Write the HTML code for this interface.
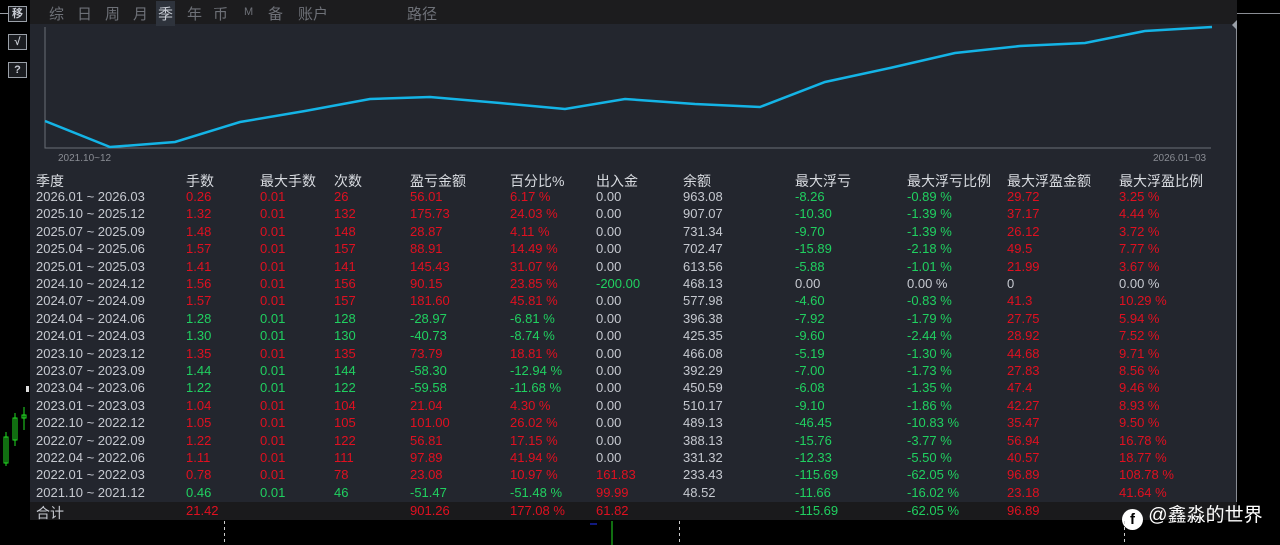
<!DOCTYPE html>
<html><head><meta charset="utf-8"><style>
*{margin:0;padding:0;box-sizing:border-box}
body{width:1280px;height:545px;background:#000;position:relative;overflow:hidden;font-family:"Liberation Sans","Noto Sans CJK SC",sans-serif;}
#panel{position:absolute;left:30px;top:0;width:1207px;height:520px;background:#23262e;border-right:1px solid #8a8d94;border-bottom:1px solid #8a8d94}
#top{position:absolute;left:0;top:0;width:1207px;height:24px;background:#1c1c1e}
#top span{position:absolute;top:3px;font-size:15px;color:#6e7178}
.btn{position:absolute;left:8px;width:19px;height:16px;border:1px solid #9aa0a8;color:#c8ccd4;font-size:11px;text-align:center;line-height:14px;font-weight:bold;background:#1a1c20}
.r{position:absolute;left:0;width:1207px;height:17.4px;font-size:13px;color:#c6c9d0}
.r span{position:absolute;top:1px;white-space:nowrap}
.R{color:#e01020!important}.G{color:#20d060!important}
.h span{color:#d8dbe0;font-size:14px}
#tot{position:absolute;left:0;top:502px;width:1207px;height:18px;background:#1a1a1c}
</style></head><body>
<div class="btn" style="top:6px">移</div>
<div class="btn" style="top:34px">√</div>
<div class="btn" style="top:62px">?</div>
<div style="position:absolute;left:0;top:13px;width:8px;height:1px;background:#9aa0a8"></div>
<div style="position:absolute;left:1237px;top:13px;width:43px;height:1px;background:#8a8d94"></div>
<svg style="position:absolute;left:0;top:380px" width="30" height="90"><g stroke="#22dd22" fill="none"><rect x="4" y="57" width="4" height="26"/><line x1="6" y1="52" x2="6" y2="86"/><rect x="13" y="38" width="4" height="22"/><line x1="15" y1="33" x2="15" y2="66"/><rect x="22" y="35" width="4" height="3"/><line x1="24" y1="27" x2="24" y2="50"/></g><rect x="26" y="6" width="3" height="6" fill="#ddd"/></svg>
<div id="panel">
<div id="top">
<span style="left:19px">综</span><span style="left:47px">日</span><span style="left:75px">周</span><span style="left:103px">月</span>
<span style="left:126px;top:1px;padding:2px 2px;background:#2e333c;color:#c8ccd4">季</span><span style="left:157px">年</span><span style="left:183px">币</span><span style="left:214px;font-size:11px;top:6px">M</span><span style="left:238px">备</span><span style="left:268px">账户</span><span style="left:377px">路径</span>
</div>
<svg style="position:absolute;left:0;top:0" width="1207" height="170">
<polyline points="15,27 15,148 1181,148" fill="none" stroke="#6a6e76" stroke-width="1"/>
<polyline points="15,121 80,147 145,142 210,122 275,111 340,99 400,97 470,103 535,109 595,99 665,104 730,107 795,82 860,68 925,53 990,46 1055,43 1115,31 1182,27" fill="none" stroke="#14b4e6" stroke-width="2.5"/>
<polygon points="1207,20 1202,25 1207,30" fill="#9aa0a8"/>
<text x="28" y="161" font-size="10" fill="#8a8d94" font-family="Liberation Sans">2021.10~12</text>
<text x="1123" y="161" font-size="10" fill="#8a8d94" font-family="Liberation Sans">2026.01~03</text>
</svg>
<div class="r h" style="top:170px"><span style="left:6px">季度</span><span style="left:156px">手数</span><span style="left:230px">最大手数</span><span style="left:304px">次数</span><span style="left:380px">盈亏金额</span><span style="left:480px">百分比%</span><span style="left:566px">出入金</span><span style="left:653px">余额</span><span style="left:765px">最大浮亏</span><span style="left:877px">最大浮亏比例</span><span style="left:977px">最大浮盈金额</span><span style="left:1089px">最大浮盈比例</span></div>
<div id="rows"></div>
<div id="tot"></div>
</div>
<div style="position:absolute;left:1122px;top:500px;width:160px;height:22px;font-size:19px;color:#fff;font-family:'Liberation Sans','Noto Sans CJK SC',sans-serif"><span style="display:inline-block;width:21px;height:21px;border-radius:50%;background:#fff;color:#000;font-weight:bold;text-align:center;line-height:21px;font-size:15px;vertical-align:-3px">f</span> @鑫淼的世界</div>
<svg style="position:absolute;left:0;top:521px" width="1280" height="24"><g stroke="#ccc" stroke-dasharray="3,3"><line x1="224.5" y1="0" x2="224.5" y2="24"/><line x1="679.5" y1="0" x2="679.5" y2="24"/><line x1="1124.5" y1="0" x2="1124.5" y2="24"/></g><line x1="612" y1="0" x2="612" y2="24" stroke="#22dd22"/><line x1="590" y1="3" x2="597" y2="3" stroke="#2233ff"/></svg>
<script>
const d=[
["2026.01 ~ 2026.03","0.26","0.01","26","56.01","6.17 %","0.00","963.08","-8.26","-0.89 %","29.72","3.25 %"],
["2025.10 ~ 2025.12","1.32","0.01","132","175.73","24.03 %","0.00","907.07","-10.30","-1.39 %","37.17","4.44 %"],
["2025.07 ~ 2025.09","1.48","0.01","148","28.87","4.11 %","0.00","731.34","-9.70","-1.39 %","26.12","3.72 %"],
["2025.04 ~ 2025.06","1.57","0.01","157","88.91","14.49 %","0.00","702.47","-15.89","-2.18 %","49.5","7.77 %"],
["2025.01 ~ 2025.03","1.41","0.01","141","145.43","31.07 %","0.00","613.56","-5.88","-1.01 %","21.99","3.67 %"],
["2024.10 ~ 2024.12","1.56","0.01","156","90.15","23.85 %","-200.00","468.13","0.00","0.00 %","0","0.00 %"],
["2024.07 ~ 2024.09","1.57","0.01","157","181.60","45.81 %","0.00","577.98","-4.60","-0.83 %","41.3","10.29 %"],
["2024.04 ~ 2024.06","1.28","0.01","128","-28.97","-6.81 %","0.00","396.38","-7.92","-1.79 %","27.75","5.94 %"],
["2024.01 ~ 2024.03","1.30","0.01","130","-40.73","-8.74 %","0.00","425.35","-9.60","-2.44 %","28.92","7.52 %"],
["2023.10 ~ 2023.12","1.35","0.01","135","73.79","18.81 %","0.00","466.08","-5.19","-1.30 %","44.68","9.71 %"],
["2023.07 ~ 2023.09","1.44","0.01","144","-58.30","-12.94 %","0.00","392.29","-7.00","-1.73 %","27.83","8.56 %"],
["2023.04 ~ 2023.06","1.22","0.01","122","-59.58","-11.68 %","0.00","450.59","-6.08","-1.35 %","47.4","9.46 %"],
["2023.01 ~ 2023.03","1.04","0.01","104","21.04","4.30 %","0.00","510.17","-9.10","-1.86 %","42.27","8.93 %"],
["2022.10 ~ 2022.12","1.05","0.01","105","101.00","26.02 %","0.00","489.13","-46.45","-10.83 %","35.47","9.50 %"],
["2022.07 ~ 2022.09","1.22","0.01","122","56.81","17.15 %","0.00","388.13","-15.76","-3.77 %","56.94","16.78 %"],
["2022.04 ~ 2022.06","1.11","0.01","111","97.89","41.94 %","0.00","331.32","-12.33","-5.50 %","40.57","18.77 %"],
["2022.01 ~ 2022.03","0.78","0.01","78","23.08","10.97 %","161.83","233.43","-115.69","-62.05 %","96.89","108.78 %"],
["2021.10 ~ 2021.12","0.46","0.01","46","-51.47","-51.48 %","99.99","48.52","-11.66","-16.02 %","23.18","41.64 %"]];
const xs=[6,156,230,304,380,480,566,653,765,877,977,1089];
let h='';
d.forEach((r,i)=>{const neg=r[4][0]=='-';h+=`<div class="r" style="top:${188+i*17.4}px">`;
r.forEach((v,j)=>{let c='';
if(j>=1&&j<=5)c=neg?'G':'R';
else if(j==6)c=v=='0.00'?'':(v[0]=='-'?'G':'R');
else if(j==8||j==9)c=v[0]=='-'?'G':'';
else if(j>=10)c=(v=='0'||v=='0.00 %')?'':'R';
h+=`<span class="${c}" style="left:${xs[j]}px">${v}</span>`;});h+='</div>';});
h+=`<div class="r" style="top:502px;z-index:2"><span style="left:6px;font-size:14px">合计</span><span class="R" style="left:156px">21.42</span><span class="R" style="left:380px">901.26</span><span class="R" style="left:480px">177.08 %</span><span class="R" style="left:566px">61.82</span><span class="G" style="left:765px">-115.69</span><span class="G" style="left:877px">-62.05 %</span><span class="R" style="left:977px">96.89</span></div>`;
document.getElementById('rows').innerHTML=h;
</script>
</body></html>
